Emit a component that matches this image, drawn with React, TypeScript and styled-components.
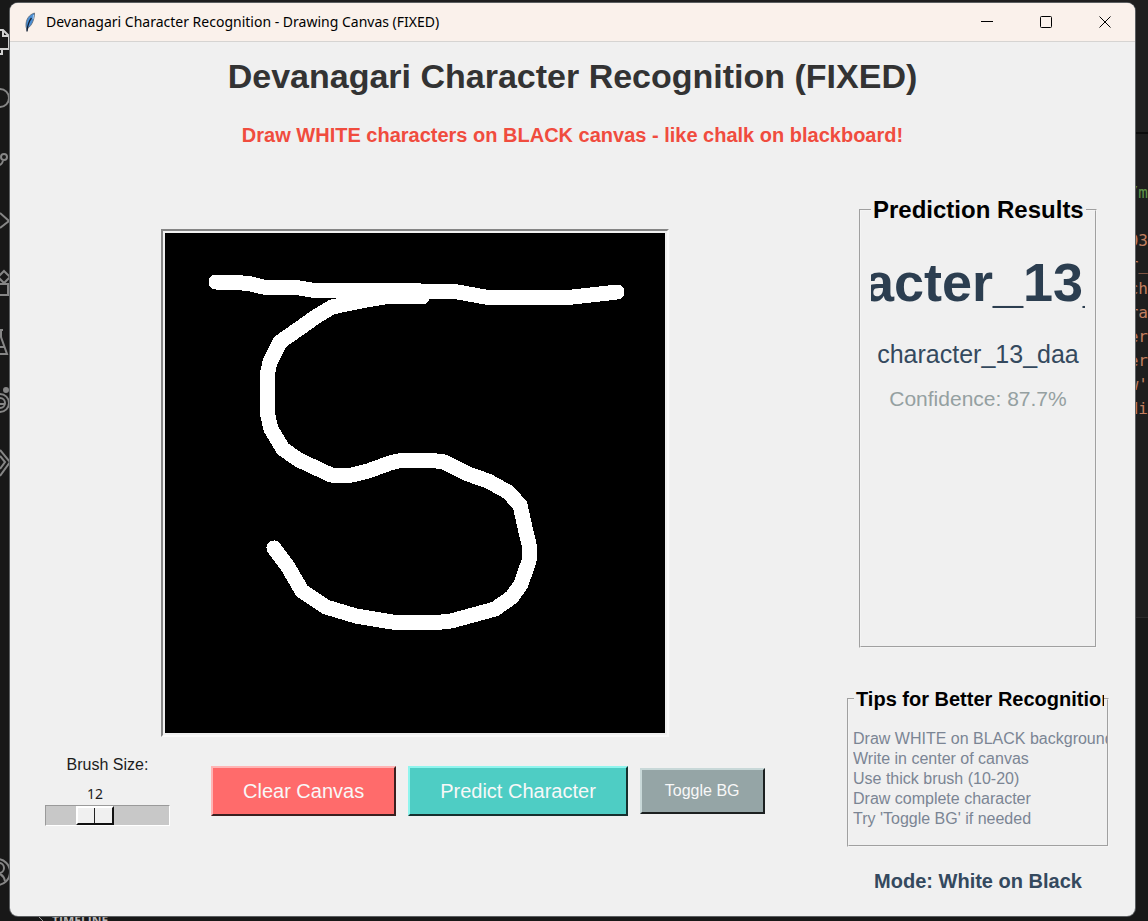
import React, { useState } from "react";
import styled, { createGlobalStyle } from "styled-components";

const GlobalStyle = createGlobalStyle`
  * { box-sizing: border-box; }
  body {
    margin: 0;
    background: #181818;
    font-family: "Liberation Sans", Arial, sans-serif;
  }
  h1, p, ul, pre { margin: 0; padding: 0; }
`;

const Desktop = styled.div`
  display: grid;
  grid-template-columns: minmax(0, 1fr);
  min-height: 100vh;
  overflow: hidden;
`;

/* Code editor that shows around the edges of the window */
const Editor = styled.div`
  grid-area: 1 / 1;
  display: grid;
  grid-template-columns: 10px 1fr 13px;
  grid-template-rows: 1fr 6px;
  background: #181818;
`;

const ActivityBar = styled.div`
  display: flex;
  flex-direction: column;
  padding: 13px 0 18px;
`;

const ActivityIcon = styled.svg.attrs({ viewBox: "0 0 10 60" })<{ $active?: boolean }>`
  display: block;
  width: 10px;
  height: 60px;
  fill: none;
  stroke: ${(p) => (p.$active ? "#d0d0d0" : "#868686")};
  stroke-width: 2;

  &:last-child {
    margin-top: auto;
  }
`;

const EditorTop = styled.div`
  height: 12px;
  background: #1f1f1f;
`;

const CodeEdge = styled.div`
  display: flex;
  flex-direction: column;
  overflow: hidden;
`;

const CodeHeader = styled.div`
  height: 134px;
  background: #1f1f1f;
  border-bottom: 2px solid #0c0c0c;
`;

const Code = styled.pre`
  display: flex;
  flex-direction: column;
  align-items: flex-end;
  height: 484px;
  padding-top: 47px;
  background: #1e1e1e;
  border-bottom: 1px solid #2b2b2b;
  color: #c27e60;
  font: 16px/24px "DejaVu Sans Mono", monospace;
`;

const CodeLine = styled.span<{ $comment?: boolean }>`
  height: 24px;
  color: ${(p) => (p.$comment ? "#5f9148" : "inherit")};
`;

const PanelEdge = styled.div`
  grid-column: 1 / -1;
  display: flex;
  gap: 8px;
  padding-left: 37px;
  overflow: hidden;
  color: #b8b8b8;
  font: 700 12px/12px "Open Sans", sans-serif;

  svg {
    flex: none;
    fill: none;
    stroke: #9a9a9a;
  }
`;

const Window = styled.main`
  grid-area: 1 / 1;
  display: flex;
  flex-direction: column;
  margin: 3px 13px 5px 10px;
  background: #f0f0f0;
  border-radius: 8px;
  box-shadow: 0 0 0 1px #5c5f61;
  overflow: hidden;
  z-index: 1;
`;

const TitleBar = styled.header`
  display: flex;
  align-items: center;
  height: 39px;
  padding: 0 1px 0 13px;
  background: #faf1eb;
  border-bottom: 1px solid #d6d4d2;
  color: #000;
  font: 14px/20px "Noto Sans", sans-serif;
`;

const TitleText = styled.span`
  flex: 1;
  padding-left: 9px;
  white-space: nowrap;
`;

const CaptionButton = styled.button`
  display: grid;
  place-items: center;
  width: 59px;
  height: 38px;
  padding: 0;
  border: 0;
  background: transparent;

  svg {
    fill: none;
    stroke: #000;
  }
`;

const Heading = styled.h1`
  padding-top: 12px;
  color: #333;
  font-size: 34px;
  line-height: 44px;
  text-align: center;
`;

const Notice = styled.p`
  padding-top: 25px;
  color: #f04c3e;
  font-size: 20px;
  font-weight: 700;
  line-height: 24px;
  text-align: center;
`;

const Content = styled.div`
  flex: 1;
  display: flex;
  gap: 62px;
  padding: 49px 26px 23px 35px;
`;

const DrawColumn = styled.section`
  flex: 1;
  display: flex;
  flex-direction: column;
  align-items: center;
  gap: 18px;
  padding-top: 33px;
`;

const CanvasFrame = styled.div`
  padding: 2px;
  border: 2px solid;
  border-color: #858585 #f9f9f9 #f9f9f9 #858585;

  svg {
    display: block;
    background: #000;
    fill: none;
    stroke: #fff;
    stroke-width: 15;
    stroke-linecap: round;
    stroke-linejoin: round;
  }
`;

const Controls = styled.div`
  display: flex;
  align-items: center;
  align-self: flex-start;
  gap: 12px;
`;

const BrushGroup = styled.div`
  display: flex;
  flex-direction: column;
  width: 125px;
  margin-right: 29px;
  color: #1c1c1c;
`;

const BrushLabel = styled.label`
  padding-bottom: 9px;
  font-size: 16px;
  line-height: 20px;
  text-align: center;
`;

const BrushValue = styled.output`
  width: 38px;
  padding-bottom: 1px;
  font: 14px/20px "Noto Sans", sans-serif;
  text-align: center;
`;

const BrushSlider = styled.input`
  appearance: none;
  width: 100%;
  height: 21px;
  margin: 0;
  background: #c8c8c8;
  border: 1px solid;
  border-color: #9a9a9a #fff #fff #9a9a9a;

  &::-webkit-slider-thumb {
    appearance: none;
    width: 38px;
    height: 19px;
    border: 2px solid;
    border-color: #fff #111 #111 #fff;
    background: linear-gradient(#222, #222) 16px 0 / 1px 100% no-repeat #f0f0f0;
  }
`;

type Tone = { $face: string; $light: string; $dark: string };

const ActionButton = styled.button<Tone & { $small?: boolean }>`
  height: ${(p) => (p.$small ? 46 : 50)}px;
  padding: 1px ${(p) => (p.$small ? 23 : 30)}px 0;
  border: 2px solid;
  border-color: ${(p) => `${p.$light} ${p.$dark} ${p.$dark} ${p.$light}`};
  background: ${(p) => p.$face};
  color: #f8f8f8;
  font-family: inherit;
  font-size: ${(p) => (p.$small ? 16 : 20)}px;
  white-space: nowrap;
`;

const SideColumn = styled.aside`
  display: flex;
  flex-direction: column;
  align-items: center;
  width: 262px;
`;

const Group = styled.fieldset`
  min-width: 0;
  margin: 0;
  border: 2px groove #f4f4f4;
`;

const ResultsGroup = styled(Group)`
  width: 238px;
  height: 452px;
  padding: 26px 10px 0;
  text-align: center;
`;

const TipsGroup = styled(Group)`
  width: 100%;
  height: 160px;
  margin-top: 39px;
  padding: 18px 0 0 4px;
`;

const Legend = styled.legend<{ $size: number }>`
  max-width: 250px;
  padding: 0 2px;
  overflow: hidden;
  color: #000;
  font-size: ${(p) => p.$size}px;
  font-weight: 700;
  line-height: ${(p) => p.$size + 4}px;
  white-space: nowrap;
`;

const TipsLegend = styled(Legend)`
  margin-left: 1px;
`;

const BigResult = styled.div`
  display: flex;
  justify-content: center;
  overflow: hidden;
  color: #2c3e50;
  font-size: 54px;
  font-weight: 700;
  line-height: 64px;
`;

const ResultName = styled.p`
  padding-top: 26px;
  color: #34495e;
  font-size: 25px;
  line-height: 28px;
`;

const Confidence = styled.p`
  padding-top: 19px;
  color: #95a0a1;
  font-size: 21px;
  line-height: 24px;
`;

const TipList = styled.ul`
  overflow: hidden;
  list-style: none;
  color: #7b8594;
  font-size: 16px;
  line-height: 20px;
  white-space: nowrap;
`;

const Mode = styled.p`
  padding-top: 22px;
  color: #34495e;
  font-size: 20px;
  font-weight: 700;
  line-height: 24px;
`;

const tips = [
  "Draw WHITE on BLACK background",
  "Write in center of canvas",
  "Use thick brush (10-20)",
  "Draw complete character",
  "Try 'Toggle BG' if needed",
];

const codeLines = ["", "03", "r_", "ch", "ra", "er", "er", "w'", "di"];

const barStroke =
  "51,49 68,49 86,51 98,54 129,54 146,57 198,57 242,57 256,58 293,59 320,64 408,64 435,61 452,59";
const bodyStroke =
  "257,64 225,63 196,68 167,74 152,83 115,109 105,129 102,143 102,179 106,196 118,216 134,227 166,242 187,242 203,238 225,230 238,227 264,227 279,229 303,241 323,248 343,259 355,272 361,299 364,311 364,328 356,351 347,364 330,376 286,388 277,389 227,389 191,383 161,374 137,358 123,334 109,315";

function EditorBackdrop() {
  return (
    <Editor aria-hidden="true">
      <ActivityBar>
        <ActivityIcon $active><path d="M0 17H3L9 23V36H0M3 17V23H9M0 41H2V36" /></ActivityIcon>
        <ActivityIcon><circle cx="0" cy="25" r="9" /></ActivityIcon>
        <ActivityIcon><circle cx="4" cy="24" r="3" /><path d="M3 28Q2 31 0 32" /></ActivityIcon>
        <ActivityIcon><path d="M0 20L9 28L0 35" /></ActivityIcon>
        <ActivityIcon><path d="M4 18L10 24L4 30L-2 24ZM0 31H8V42H0" /></ActivityIcon>
        <ActivityIcon><path d="M0 17H3M1 17V24L7 41H0M0 34H4" /></ActivityIcon>
        <ActivityIcon>
          <circle cx="0" cy="30" r="9" />
          <circle cx="0" cy="30" r="5" />
          <circle cx="6" cy="17" r="2" fill="#868686" />
          <path d="M0 31H4" />
        </ActivityIcon>
        <ActivityIcon><path d="M0 17L10 29L0 43M0 23L5 29L0 36" /></ActivityIcon>
        <ActivityIcon><circle cx="-3" cy="35" r="13" /><circle cx="-1" cy="31" r="5" /><path d="M0 37Q4 39 5 44" /></ActivityIcon>
      </ActivityBar>
      <EditorTop />
      <CodeEdge>
        <CodeHeader />
        <Code>
          <CodeLine $comment>/m</CodeLine>
          {codeLines.map((line, i) => (
            <CodeLine key={i}>{line}</CodeLine>
          ))}
        </Code>
      </CodeEdge>
      <PanelEdge>
        <svg width="7" height="6"><path d="M0 0L6 6" /></svg>
        TIMELINE
        <svg width="600" height="6"><path d="M450 1.500H460M477 1.500H487" /></svg>
      </PanelEdge>
    </Editor>
  );
}

function FeatherIcon() {
  return (
    <svg width="14" height="22" viewBox="0 0 14 22">
      <path d="M11.500 2C6.500 3.500 2.500 8 3 15.500L4 19.500L5 17C9 14.500 11.500 8 11.500 2Z" fill="#4a8fd6" stroke="#5a6470" strokeWidth="0.800" />
      <path d="M8.500 7C6 10 4.500 14 4 20.500" fill="none" stroke="#142236" strokeWidth="1.300" />
      <path d="M10.500 4L10 8" fill="none" stroke="#a8ccf0" />
    </svg>
  );
}

export default function App() {
  const min = 5;
  const max = 25;
  const [brush, setBrush] = useState(12);
  const [whiteOnBlack, setWhiteOnBlack] = useState(true);
  const thumbOffset = Math.round(((brush - min) / (max - min)) * 85) + 1;

  return (
    <>
      <GlobalStyle />
      <Desktop>
        <EditorBackdrop />
        <Window>
          <TitleBar>
            <FeatherIcon />
            <TitleText>Devanagari Character Recognition - Drawing Canvas (FIXED)</TitleText>
            <CaptionButton aria-label="Minimize">
              <svg width="12" height="12"><path d="M0 5.500H12" /></svg>
            </CaptionButton>
            <CaptionButton aria-label="Maximize">
              <svg width="12" height="12"><rect x="0.500" y="0.500" width="11" height="11" rx="1" /></svg>
            </CaptionButton>
            <CaptionButton aria-label="Close">
              <svg width="12" height="12"><path d="M0.500 0.500L11.500 11.500M11.500 0.500L0.500 11.500" /></svg>
            </CaptionButton>
          </TitleBar>
          <Heading>Devanagari Character Recognition (FIXED)</Heading>
          <Notice>Draw WHITE characters on BLACK canvas - like chalk on blackboard!</Notice>
          <Content>
            <DrawColumn>
              <CanvasFrame>
                <svg width="500" height="500" role="img" aria-label="Drawing canvas" shapeRendering="crispEdges">
                  <polyline points={barStroke} />
                  <polyline points={bodyStroke} />
                </svg>
              </CanvasFrame>
              <Controls>
                <BrushGroup>
                  <BrushLabel htmlFor="brush">Brush Size:</BrushLabel>
                  <BrushValue htmlFor="brush" style={{ marginLeft: thumbOffset }}>{brush}</BrushValue>
                  <BrushSlider
                    id="brush"
                    type="range"
                    min={min}
                    max={max}
                    value={brush}
                    onChange={(e) => setBrush(Number(e.target.value))}
                  />
                </BrushGroup>
                <ActionButton $face="#ff6b6b" $light="#ffb4b4" $dark="#3a2020">Clear Canvas</ActionButton>
                <ActionButton $face="#4ecdc4" $light="#8ff5ee" $dark="#16302e">Predict Character</ActionButton>
                <ActionButton
                  $small
                  $face="#95a5a6"
                  $light="#c8d8d8"
                  $dark="#1c2020"
                  onClick={() => setWhiteOnBlack(!whiteOnBlack)}
                >
                  Toggle BG
                </ActionButton>
              </Controls>
            </DrawColumn>
            <SideColumn>
              <ResultsGroup>
                <Legend $size={24}>Prediction Results</Legend>
                <BigResult><span>character_13_daa</span></BigResult>
                <ResultName>character_13_daa</ResultName>
                <Confidence>Confidence: 87.7%</Confidence>
              </ResultsGroup>
              <TipsGroup>
                <TipsLegend $size={20}>Tips for Better Recognition</TipsLegend>
                <TipList>
                  {tips.map((tip) => (
                    <li key={tip}>{tip}</li>
                  ))}
                </TipList>
              </TipsGroup>
              <Mode>Mode: {whiteOnBlack ? "White on Black" : "Black on White"}</Mode>
            </SideColumn>
          </Content>
        </Window>
      </Desktop>
    </>
  );
}
